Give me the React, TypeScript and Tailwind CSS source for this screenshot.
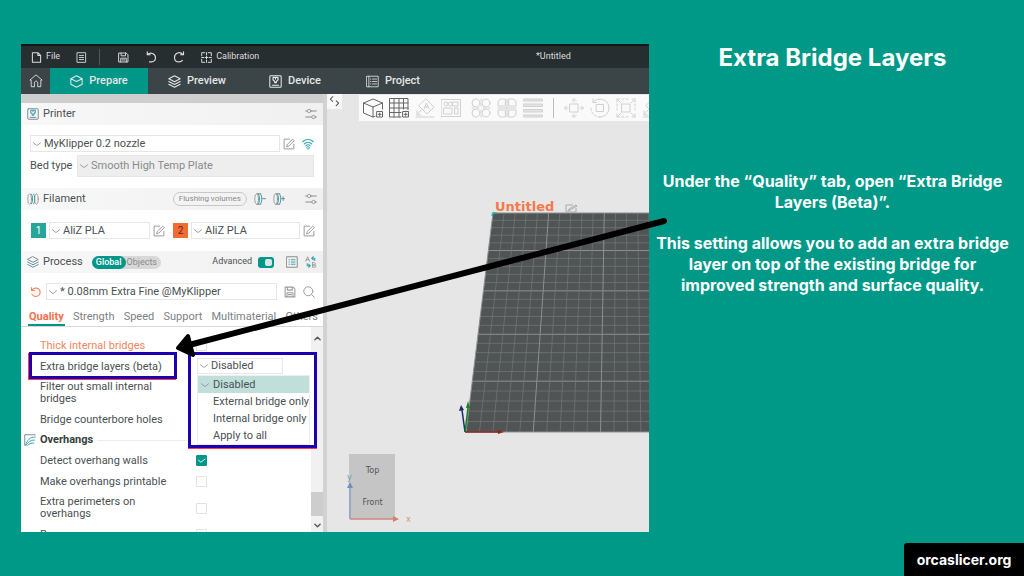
import type { ReactNode } from 'react';
import clsx from 'clsx';

interface IconProps {
    className?: string;
    children: ReactNode;
    box?: number;
}

function Icon({ className, children, box = 16 }: IconProps) {
    return (
        <svg
            viewBox={`0 0 ${box} ${box}`}
            fill="none"
            stroke="currentColor"
            strokeLinecap="round"
            strokeLinejoin="round"
            aria-hidden="true"
            className={clsx('shrink-0', className)}
        >
            {children}
        </svg>
    );
}

const SaveIcon = ({ className }: { className?: string }) => (
    <Icon className={className}>
        <path strokeWidth="1.400" d="M1.500 1.500h10.500l2.500 2.500v10.500h-13zM4.500 1.500v4h6.500v-4M4 14.500V9h8v5.500M6 11.500h4" />
    </Icon>
);

const EditIcon = () => (
    <Icon className="size-3 text-[#9a9a9a]">
        <path strokeWidth="1.300" d="M14.500 8.500v6h-13v-13H9M5 11.500l.8-3L13 1.500l2 2-7 7z" />
    </Icon>
);

const SlidersIcon = () => (
    <Icon className="size-3 text-[#8a8a8a]">
        <path strokeWidth="1.300" d="M1 4h2M8 4h7M1 12h8M14 12h1" />
        <circle cx="5.500" cy="4" r="2.300" />
        <circle cx="11.500" cy="12" r="2.300" />
    </Icon>
);

const LayersIcon = ({ className, accent }: { className?: string; accent?: string }) => (
    <Icon className={className}>
        <path strokeWidth="1.300" d="M8 1l7 3.700-7 3.700-7-3.700z" />
        <path strokeWidth="1.300" className={accent} d="M1 8l7 3.700L15 8" />
        <path strokeWidth="1.300" d="M1 11.300L8 15l7-3.700" />
    </Icon>
);

const PrinterIcon = ({ className, accent }: { className?: string; accent?: string }) => (
    <Icon className={className}>
        <rect x="1" y="1" width="14" height="14" rx="1" strokeWidth="1.300" />
        <path strokeWidth="1.300" d="M4 12.500h8" />
        <path strokeWidth="1.500" className={accent} d="M5 3h6v3L9 8v1.500H7V8L5 6zM8 4v1" />
    </Icon>
);

const Chevron = ({ className }: { className?: string }) => (
    <Icon className={clsx('pointer-events-none absolute left-[3px] size-2 text-[#8c8c8c]', className)}>
        <path strokeWidth="1.800" d="M1 5.500l4.500 4c1.500 1.300 3.500 1.300 5 0l4.500-4" />
    </Icon>
);

function SpoolIcon({ sign }: { sign?: 'minus' | 'plus' }) {
    return (
        <Icon className="size-3 text-[#888]">
            <ellipse cx="3.500" cy="8" rx="2.500" ry="7" />
            <path className="text-[#3aa5b0]" strokeWidth="1.300" d="M6 1.500c2 2 2 11 0 13M9 1.500c2 2 2 11 0 13" />
            {!sign && <ellipse cx="12.500" cy="8" rx="2.500" ry="7" />}
            {sign && <path strokeWidth="1.300" d="M11 7.500h5M4 1h5M4 15h5" />}
            {sign === 'plus' && <path strokeWidth="1.300" d="M13.500 5v5" />}
        </Icon>
    );
}

interface ComboProps {
    label: string;
    value: string;
    className?: string;
}

function Combo({ label, value, className }: ComboProps) {
    return (
        <span className={clsx('relative flex min-w-0 items-center', className)}>
            <Chevron />
            <select
                aria-label={label}
                className="size-full appearance-none truncate border border-[#e6e6e6] bg-transparent pl-[13px] text-[11px] leading-3 outline-none"
            >
                <option>{value}</option>
            </select>
        </span>
    );
}

function SectionHeader({ children }: { children: ReactNode }) {
    return (
        <div className="flex h-[22px] shrink-0 items-center bg-linear-to-r from-[#f8f8f8] to-[#f0f0f0] px-[6px]">
            {children}
        </div>
    );
}

function TitleBar() {
    const button = 'flex items-center gap-1';
    return (
        <header className="relative flex h-6 shrink-0 items-center border-t-2 border-[#101617] bg-[#272e30] pl-[10px] text-[9px] text-[#dcdcdc]">
            <button className={button}>
                <Icon className="size-[11px]">
                    <path strokeWidth="1.500" d="M2 1h8l4 4v10H2zM10 1v4h4" />
                </Icon>
                File
            </button>
            <button aria-label="Menu" className="ml-4">
                <Icon className="size-[11px]">
                    <path strokeWidth="1.300" d="M2 1h12v14H2zM5 5h6M5 8h6M5 11h6" />
                </Icon>
            </button>
            <span className="ml-3 h-4 w-px bg-[#515859]" />
            <button aria-label="Save" className="ml-[18px]">
                <SaveIcon className="size-[11px]" />
            </button>
            <button aria-label="Undo" className="ml-4">
                <Icon className="size-3">
                    <path strokeWidth="1.500" d="M3 1v4h4M3 5c4-4 11-2 11 4 0 3-2 5-5 5.500H6" />
                </Icon>
            </button>
            <button aria-label="Redo" className="ml-4">
                <Icon className="size-3">
                    <path strokeWidth="1.500" d="M14 1v4h-4M13.500 5C9-.5 2 3 2 8.500c0 4 3 6 6 6 2 0 3.500-.5 4.500-2" />
                </Icon>
            </button>
            <button className={clsx(button, 'ml-4')}>
                <Icon className="size-[11px]">
                    <path
                        strokeWidth="1.400"
                        d="M5.500 1H1v4.500M10.500 1H15v4.500M1 10.500V15h4.500M15 10.500V15h-4.500M8 1v3M8 6v4M6 8h4M8 12v3M1 8h3M12 8h3"
                    />
                </Icon>
                Calibration
            </button>
            <span className="absolute left-[82%]">*Untitled</span>
        </header>
    );
}

function MainTabs() {
    const tab = 'flex h-full w-[98px] items-center justify-center gap-[6px]';
    return (
        <nav className="flex h-[26px] shrink-0 items-center bg-[#3b4446] text-[11px] font-medium text-[#e6e6e6]">
            <button aria-label="Home" className="flex w-[29px] justify-center">
                <Icon className="size-[14px]">
                    <path d="M6 14.500H2.500V7H1l7-6 7 6h-1.500v7.500H10V10c0-2.500-4-2.500-4 0z" />
                </Icon>
            </button>
            <button className={clsx(tab, 'bg-[#009688]')}>
                <Icon className="size-[13px]">
                    <path strokeWidth="1.300" d="M8 1l7 3.500v7L8 15l-7-3.500v-7zM1 4.500L8 8l7-3.500" />
                </Icon>
                Prepare
            </button>
            <button className={tab}>
                <LayersIcon className="size-[13px]" />
                Preview
            </button>
            <button className={tab}>
                <PrinterIcon className="size-[13px]" />
                Device
            </button>
            <button className={tab}>
                <Icon className="size-[13px]">
                    <path d="M1 1.500h14v13H1zM3.500 1.500v13M8 5h5M8 8h5M8 11h5M5.500 5h.5M5.500 8h.5M5.500 11h.5" />
                </Icon>
                Project
            </button>
        </nav>
    );
}

const bridgeOptions = ['Disabled', 'External bridge only', 'Internal bridge only', 'Apply to all'];

/* Open drop-down with its marker frame */
function BridgeMenu() {
    return (
        <div className="absolute -top-1 left-[167px] z-10 w-[129px] border-[3px] border-[#1c00b0] bg-white px-[6px] pt-[3px] shadow-[0_1px_0_#ff3b4a]">
            <Combo label="Extra bridge layers (beta)" value="Disabled" className="h-4 w-[86px]" />
            <ul role="listbox" aria-label="Bridge options" className="mt-px w-[113px] border border-[#eeeeee]">
                {bridgeOptions.map((option, i) => (
                    <li
                        key={option}
                        role="option"
                        aria-selected={i === 0}
                        className={clsx(
                            'relative flex h-[17px] items-center pl-[15px] whitespace-nowrap',
                            i === 0 && 'bg-[#c0dfdb]',
                        )}
                    >
                        {i === 0 && <Chevron />}
                        {option}
                    </li>
                ))}
            </ul>
        </div>
    );
}

interface CheckRowProps {
    id: string;
    label: string;
    checked?: boolean;
    tall?: boolean;
    changed?: boolean;
}

function CheckRow({ id, label, checked, tall, changed }: CheckRowProps) {
    return (
        <div className={clsx('flex shrink-0 items-center pl-[19px]', tall ? 'h-8' : 'h-[21px]')}>
            <label htmlFor={id} className={clsx('w-[156px] pr-5', changed && 'text-[#f4845f]')}>
                {label}
            </label>
            <span className="relative flex size-[11px]">
                <input
                    id={id}
                    type="checkbox"
                    defaultChecked={checked}
                    className="peer size-full appearance-none rounded-[1px] border border-[#e2e2e2] bg-white checked:border-[#009688] checked:bg-[#009688]"
                />
                <Icon className="pointer-events-none absolute inset-0 hidden size-full text-white peer-checked:block">
                    <path strokeWidth="1.300" d="M3.500 7.500l3.500 3 6-4.500" />
                </Icon>
            </span>
        </div>
    );
}

function SettingsList() {
    return (
        <div className="flex min-h-0 flex-1 overflow-hidden">
            <div className="flex min-w-0 flex-1 flex-col pt-2 leading-3">
                <CheckRow id="thick" label="Thick internal bridges" changed />
                <div className="relative flex h-[21px] shrink-0 items-center pl-[19px]">
                    <span className="absolute -top-1 left-2 h-[27px] w-[148px] border-[3px] border-[#1c00b0] shadow-[-1px_1px_0_#ff3b4a]" />
                    Extra bridge layers (beta)
                    <BridgeMenu />
                </div>
                <div className="flex h-8 shrink-0 items-center pl-[19px]">
                    <span className="w-[130px]">Filter out small internal bridges</span>
                </div>
                <div className="flex h-[21px] shrink-0 items-center pl-[19px]">Bridge counterbore holes</div>
                <div className="flex h-5 shrink-0 items-center gap-1 pl-[3px] font-bold text-[#363e40]">
                    <Icon className="size-3 text-[#7c8a90]">
                        <path strokeWidth="1.300" d="M1 15V1h14" />
                        <path
                            className="text-[#3aa5b0]"
                            strokeWidth="1.300"
                            d="M2 15C4 8 8 4 15 4M3 15c2-4 5-7 11-7M5 15c2-2 4-3 8-3"
                        />
                    </Icon>
                    Overhangs
                    <span className="h-px flex-1 bg-[#eeeeee]" />
                </div>
                <CheckRow id="detect" label="Detect overhang walls" checked />
                <CheckRow id="printable" label="Make overhangs printable" />
                <CheckRow id="perimeters" label="Extra perimeters on overhangs" tall />
                <CheckRow id="reverse" label="Reverse on even" />
            </div>
            {/* Scroll bar */}
            <div className="flex w-3 flex-col items-center bg-[#f1f1f1] pt-2 pb-[3px] text-[#555]">
                <Icon className="size-[7px]">
                    <path strokeWidth="3" d="M2 11l6-6 6 6" />
                </Icon>
                <span className="flex-1" />
                <span className="h-6 w-full bg-[#cdcdcd]" />
                <Icon className="mt-[6px] size-[7px]">
                    <path strokeWidth="3" d="M2 5l6 6 6-6" />
                </Icon>
            </div>
        </div>
    );
}

function Sidebar() {
    const settingTabs = ['Quality', 'Strength', 'Speed', 'Support', 'Multimaterial', 'Others'];
    return (
        <section className="flex w-[306px] shrink-0 flex-col border-r-4 border-[#d2d2d2] bg-white text-[11px] text-[#4a5154]">
            <div className="h-[9px] shrink-0 bg-[#cecece]" />
            <SectionHeader>
                <PrinterIcon className="size-3 text-[#7c8a90]" accent="text-[#3aa5b0]" />
                <h2 className="ml-1 flex-1">Printer</h2>
                <SlidersIcon />
            </SectionHeader>
            <div className="px-[9px] pt-[10px] pb-[11px]">
                <div className="flex h-[17px] items-center">
                    <Combo label="Printer preset" value="MyKlipper 0.2 nozzle" className="h-full w-[252px]" />
                    <button aria-label="Edit printer" className="ml-[3px]">
                        <EditIcon />
                    </button>
                    <button aria-label="Connection" className="ml-[7px]">
                        <Icon className="size-3 text-[#3aa5b0]">
                            <path strokeWidth="1.500" d="M1 5c4-4 10-4 14 0M3 8c3-3 7-3 10 0M5 10.500c2-2 4-2 6 0" />
                            <circle cx="8" cy="13" r="1.700" />
                        </Icon>
                    </button>
                </div>
                <div className="mt-[3px] flex h-[22px] items-center">
                    <span className="w-[47px]">Bed type</span>
                    <Combo
                        label="Bed type"
                        value="Smooth High Temp Plate"
                        className="h-full flex-1 bg-[#eeeeee] text-[#888c8e]"
                    />
                </div>
            </div>
            <SectionHeader>
                <SpoolIcon />
                <h2 className="ml-1 flex-1">Filament</h2>
                <button className="rounded-full border border-[#c8c8c8] px-[5px] text-[8px] leading-3 text-[#8c8c8c]">
                    Flushing volumes
                </button>
                <button aria-label="Remove filament" className="ml-[7px]">
                    <SpoolIcon sign="minus" />
                </button>
                <button aria-label="Add filament" className="ml-[7px] mr-5">
                    <SpoolIcon sign="plus" />
                </button>
                <SlidersIcon />
            </SectionHeader>
            <div className="flex items-center py-3 pr-2 pl-[10px]">
                <span className="flex size-[15px] items-center justify-center bg-[#26a69a] text-[10px] text-white">1</span>
                <Combo label="Filament 1" value="AliZ PLA" className="ml-[3px] h-[17px] w-[101px]" />
                <button aria-label="Edit filament 1" className="ml-[3px]">
                    <EditIcon />
                </button>
                <span className="ml-2 flex size-[15px] items-center justify-center bg-[#f26b32] text-[10px] text-[#5a2410]">2</span>
                <Combo label="Filament 2" value="AliZ PLA" className="ml-[3px] h-[17px] flex-1" />
                <button aria-label="Edit filament 2" className="ml-[3px]">
                    <EditIcon />
                </button>
            </div>
            <SectionHeader>
                <LayersIcon className="size-3 text-[#7c8a90]" accent="text-[#3aa5b0]" />
                <h2 className="ml-1">Process</h2>
                <span className="ml-[9px] flex h-[13px] items-center rounded-full bg-[#d8d8d8] text-[9px] leading-3 text-[#8a8a8a]">
                    <button className="h-full rounded-full bg-[#009688] px-1 font-medium text-white">Global</button>
                    <button className="pr-1 pl-px">Objects</button>
                </span>
                <label htmlFor="advanced" className="ml-auto text-[9px]">
                    Advanced
                </label>
                <span className="relative ml-[6px] flex h-[11px] w-4">
                    <input
                        id="advanced"
                        type="checkbox"
                        defaultChecked
                        className="size-full appearance-none rounded-[3px] bg-[#b5b5b5] checked:bg-[#009688]"
                    />
                    <span className="pointer-events-none absolute top-[2px] right-[2px] size-[7px] rounded-[2px] bg-[#d5e8e6]" />
                </span>
                <button aria-label="Parameter list" className="ml-3">
                    <Icon className="size-3 text-[#8a8a8a]">
                        <path strokeWidth="1.300" d="M1 1h14v14H1z" />
                        <path className="text-[#3aa5b0]" strokeWidth="1.300" d="M4 5h.5M7 5h5M4 8h.5M7 8h5M4 11h.5M7 11h5" />
                    </Icon>
                </button>
                <button aria-label="Compare presets" className="ml-[7px]">
                    <Icon className="size-3 text-[#8a8a8a]">
                        <path d="M1 7l2.500-6L6 7M2 5h3M10 9v6h3c2 0 2-3 0-3h-3 2.500c2 0 2-3 0-3z" />
                        <path className="text-[#3aa5b0]" strokeWidth="1.500" d="M11 1L9 3l2 2M9 3h4v3M5 15l2-2-2-2M7 13H3v-3" />
                    </Icon>
                </button>
            </SectionHeader>
            <div className="flex shrink-0 items-center pt-[10px] pr-2 pl-[9px]">
                <button aria-label="Reset preset">
                    <Icon className="size-3 text-[#f4845f]">
                        <path strokeWidth="1.500" d="M2 2v4h4M2.500 6C5 1 13 2 13.500 8c0 6-8 8-11 3" />
                    </Icon>
                </button>
                <Combo label="Process preset" value="* 0.08mm Extra Fine @MyKlipper" className="ml-1 h-[17px] flex-1" />
                <button aria-label="Save preset" className="ml-[7px]">
                    <SaveIcon className="size-3 text-[#9a9a9a]" />
                </button>
                <button aria-label="Search" className="ml-[7px]">
                    <Icon className="size-3 text-[#9a9a9a]">
                        <circle cx="7" cy="7" r="6" strokeWidth="1.300" />
                        <path strokeWidth="1.300" d="M11.500 11.500L15 15" />
                    </Icon>
                </button>
            </div>
            <div className="flex h-[27px] shrink-0 items-end justify-between border-b border-[#d8d8d8] pr-1 pl-[7px] text-[#7b8184]">
                {settingTabs.map((tab, i) => (
                    <button
                        key={tab}
                        className={clsx(
                            'border-b-2 px-px leading-[14px]',
                            i === 0 ? 'border-[#009688] font-bold text-[#f4704a]' : 'border-transparent',
                        )}
                    >
                        {tab}
                    </button>
                ))}
            </div>
            <SettingsList />
        </section>
    );
}

function CanvasToolbar() {
    const group = 'flex gap-[6px]';
    const dim = 'size-5 text-[#d0d0d0]';
    return (
        <div className="absolute top-px right-0 left-8 flex h-[26px] items-center gap-[10px] overflow-hidden bg-[#fafafa] pl-1">
            <div className={group}>
                <button aria-label="Add object">
                    <Icon box={20} className="size-5 text-[#666]">
                        <path d="M12 18.300L10 19l-9.500-4V5L10 1l9.500 4v6M.5 5L10 9l9.500-4M10 9v10M14 13.500h5.500V19H14zM16.700 15v3M15.200 16.300h3" />
                    </Icon>
                </button>
                <button aria-label="Add plate">
                    <Icon box={20} className="size-5 text-[#666]">
                        <path d="M12 19H.5V.5H19v11M5 .5V19M10 .5V19M14.500.5V11M.5 5H19M.5 10H19M.5 14.500H12M14 13.500h5.500V19H14zM16.700 15v3M15.200 16.300h3" />
                    </Icon>
                </button>
                <button aria-label="Auto orient">
                    <Icon box={20} className={dim}>
                        <path d="M1 19h18M11 1l8 8-7 7-8-8zM9 11l2.500-6L14 11M10 9h3M6 12l-4 5M2 13v4h4" />
                    </Icon>
                </button>
                <button aria-label="Arrange">
                    <Icon box={20} className={dim}>
                        <path d="M.5 1.500h19v17H.5zM3 10h8v6H3zM14 10h3v6h-3zM12 4h5v4h-5z" />
                        <circle cx="5" cy="6" r="2" />
                        <circle cx="9.500" cy="6" r="2" />
                    </Icon>
                </button>
            </div>
            <div className={group}>
                <button aria-label="Split to objects">
                    <Icon box={20} className={dim}>
                        <circle cx="5" cy="5" r="4" />
                        <circle cx="15" cy="5" r="4" />
                        <circle cx="5" cy="15" r="4" />
                        <circle cx="15" cy="15" r="4" />
                        <path d="M10 1v2M10 6v2M10 12v2M10 17v2M1 10h2M6 10h2M12 10h2M17 10h2" />
                    </Icon>
                </button>
                <button aria-label="Split to parts">
                    <Icon box={20} className={dim}>
                        <path d="M8 8H1V5c0-3 2-4 4-4h3zM12 8h7V5c0-3-2-4-4-4h-3zM8 12H1v3c0 3 2 4 4 4h3zM12 12h7v3c0 3-2 4-4 4h-3zM10 1v18M1 10h18" />
                    </Icon>
                </button>
                <button aria-label="Variable layer height">
                    <Icon box={20} className={dim}>
                        <path
                            fill="currentColor"
                            fillOpacity="0.5"
                            d="M.5 1h19v2H.5zM.5 6h19v2.500H.5zM.5 11.500h19V14H.5zM.5 17h19v2H.5z"
                        />
                    </Icon>
                </button>
            </div>
            <span className="h-5 w-px shrink-0 bg-[#bdbdbd]" />
            <div className={group}>
                <button aria-label="Move">
                    <Icon box={20} className={dim}>
                        <path d="M6 6h8v8H6zM10 4V1M8 2.500L10 .5l2 2M10 16v3M8 17.500l2 2 2-2M4 10H1M2.500 8l-2 2 2 2M16 10h3M17.500 8l2 2-2 2" />
                    </Icon>
                </button>
                <button aria-label="Rotate">
                    <Icon box={20} className={dim}>
                        <path d="M6.500 6.500h7v7h-7zM3 4C8-1.500 19 1 19 10c0 5-4 9-9 9M3 1v3.500h3.500" />
                        <path strokeDasharray="2 2" d="M10 19c-5 0-9-4-9-9" />
                    </Icon>
                </button>
                <button aria-label="Scale">
                    <Icon box={20} className={dim}>
                        <path d="M6 6h8v8H6zM5 5L1 1M15 5l4-4M5 15l-4 4M15 15l4 4M1 4V1h3M16 1h3v3M1 16v3h3M16 19h3v-3" />
                        <path strokeDasharray="2 2" d="M6 1h8M6 19h8M1 6v8M19 6v8" />
                    </Icon>
                </button>
                <button aria-label="Lay on face">
                    <Icon box={20} className={dim}>
                        <path d="M1 19h18M11 1l8 8-7 7-8-8zM6 12l-4 5M2 13v4h4" />
                    </Icon>
                </button>
            </div>
        </div>
    );
}

/* Build plate in perspective: 25 rows, a bold line on every fifth */
function BuildPlate() {
    const top = 119;
    const bottom = 338;
    const rows = Array.from({ length: 26 }, (_, i) => {
        const t = i / 25;
        const s = (t * 55.6) / ((1 - t) * 67.2 + t * 55.6);
        return { y: top + (bottom - top) * s, x: 166 - 27 * s, major: i % 5 === 0 };
    });
    const cols = Array.from({ length: 26 }, (_, i) => ({
        x1: 166 + i * 11.13,
        x2: 139 + i * 13.45,
        major: i % 5 === 0,
    }));
    return (
        <svg className="absolute inset-0 size-full" aria-hidden="true">
            <path d="M166 119h278l31 219H139z" fill="#505455" />
            {rows.map((r) => (
                <path
                    key={r.y}
                    d={`M${r.x} ${r.y}H460`}
                    stroke={r.major ? '#8d9090' : '#747878'}
                    strokeWidth={r.major ? 1 : 0.7}
                />
            ))}
            {cols.map((c) => (
                <path
                    key={c.x1}
                    d={`M${c.x1} ${top}L${c.x2} ${bottom}`}
                    stroke={c.major ? '#8d9090' : '#747878'}
                    strokeWidth={c.major ? 1 : 0.7}
                />
            ))}
            <path d="M165 122l1-3h4" stroke="#20b0b0" strokeWidth="1.500" fill="none" />
            <path
                d="M246 111h-7v7h10v-4M241 117l1-2 7-4 1 1-7 4z"
                stroke="#a5a5a5"
                strokeWidth="0.900"
                fill="none"
            />
            {/* Origin axes */}
            <path d="M138 338l-3-22" stroke="#1b2a6b" strokeWidth="1.500" />
            <path d="M132 317l2-6 3 5z" fill="#1b2a6b" />
            <path d="M138 338l3-24" stroke="#17801f" strokeWidth="1.500" />
            <path d="M139 314l2-7 2 7z" fill="#17801f" />
            <path d="M138 338h34" stroke="#8c2320" strokeWidth="1.500" />
            <path d="M171 336l6 2-6 2z" fill="#8c2320" />
            {/* View cube */}
            <path d="M22 360h46v65H22z" fill="#c5c5c5" />
            <path d="M23 425v-32" stroke="#8aa0c0" strokeWidth="1.500" />
            <path d="M20 394l3-6 3 6z" fill="#6f92bd" />
            <path d="M23 425h43" stroke="#cf8a7c" strokeWidth="1.500" />
            <path d="M66 422l6 3-6 3z" fill="#cf8070" />
        </svg>
    );
}

function Viewport() {
    return (
        <section className="relative min-w-0 flex-1 overflow-hidden bg-[#e6e6e6] font-['DejaVu_Sans',sans-serif] text-[8px] leading-3 text-[#555]">
            <BuildPlate />
            <CanvasToolbar />
            <button aria-label="Collapse sidebar" className="absolute top-0 left-0 flex size-[15px] items-center justify-center bg-[#f8f8f8]">
                <Icon className="size-[11px] text-[#555]">
                    <path strokeWidth="1.500" d="M5.500 1L2 4.500 5.500 8M10.500 7l3.500 3.500-3.500 3.500" />
                </Icon>
            </button>
            <span className="absolute top-[107px] left-[168px] text-[13px] font-bold text-[#f4794a]">Untitled</span>
            <span className="absolute top-[371px] left-[23px] w-[45px] text-center">Top</span>
            <span className="absolute top-[403px] left-[23px] w-[45px] text-center">Front</span>
            <span className="absolute top-[378px] left-[20px] text-[#6d9aa8]">y</span>
            <span className="absolute top-[420px] left-[79px] text-[#c2a070]">x</span>
        </section>
    );
}

export default function App() {
    return (
        <main className="relative grid h-screen grid-cols-[628fr_375fr] overflow-hidden bg-[#009887] py-11 pl-[21px] font-['Roboto',sans-serif]">
            <div className="relative min-h-0">
                <div className="flex h-full flex-col overflow-hidden">
                    <TitleBar />
                    <MainTabs />
                    <div className="flex min-h-0 flex-1">
                        <Sidebar />
                        <Viewport />
                    </div>
                </div>
                {/* Pointer arrow */}
                <svg
                    className="pointer-events-none absolute top-0 left-0 z-20 h-[320px] w-[660px]"
                    stroke="#000"
                    strokeLinecap="round"
                    strokeLinejoin="round"
                    aria-hidden="true"
                >
                    <path d="M643 177L168 301" strokeWidth="6" />
                    <path d="M157 304l10-12 5 19z" strokeWidth="4" />
                </svg>
            </div>
            <aside className="z-10 pr-2 text-center font-['Inter',sans-serif] font-bold text-white">
                <h1 className="text-[24px] leading-7">Extra Bridge Layers</h1>
                <p className="mt-[99px] text-[16px] leading-[21px]">
                    Under the “Quality” tab, open “Extra Bridge
                    <br />
                    Layers (Beta)”.
                </p>
                <p className="mt-5 text-[16px] leading-[21px]">
                    This setting allows you to add an extra bridge
                    <br />
                    layer on top of the existing bridge for
                    <br />
                    improved strength and surface quality.
                </p>
            </aside>
            <a
                href="https://orcaslicer.org"
                className="absolute right-0 bottom-0 flex h-[33px] w-[120px] items-center justify-center rounded-tl-[3px] bg-black font-['Inter',sans-serif] text-[14px] font-bold text-white"
            >
                orcaslicer.org
            </a>
        </main>
    );
}
